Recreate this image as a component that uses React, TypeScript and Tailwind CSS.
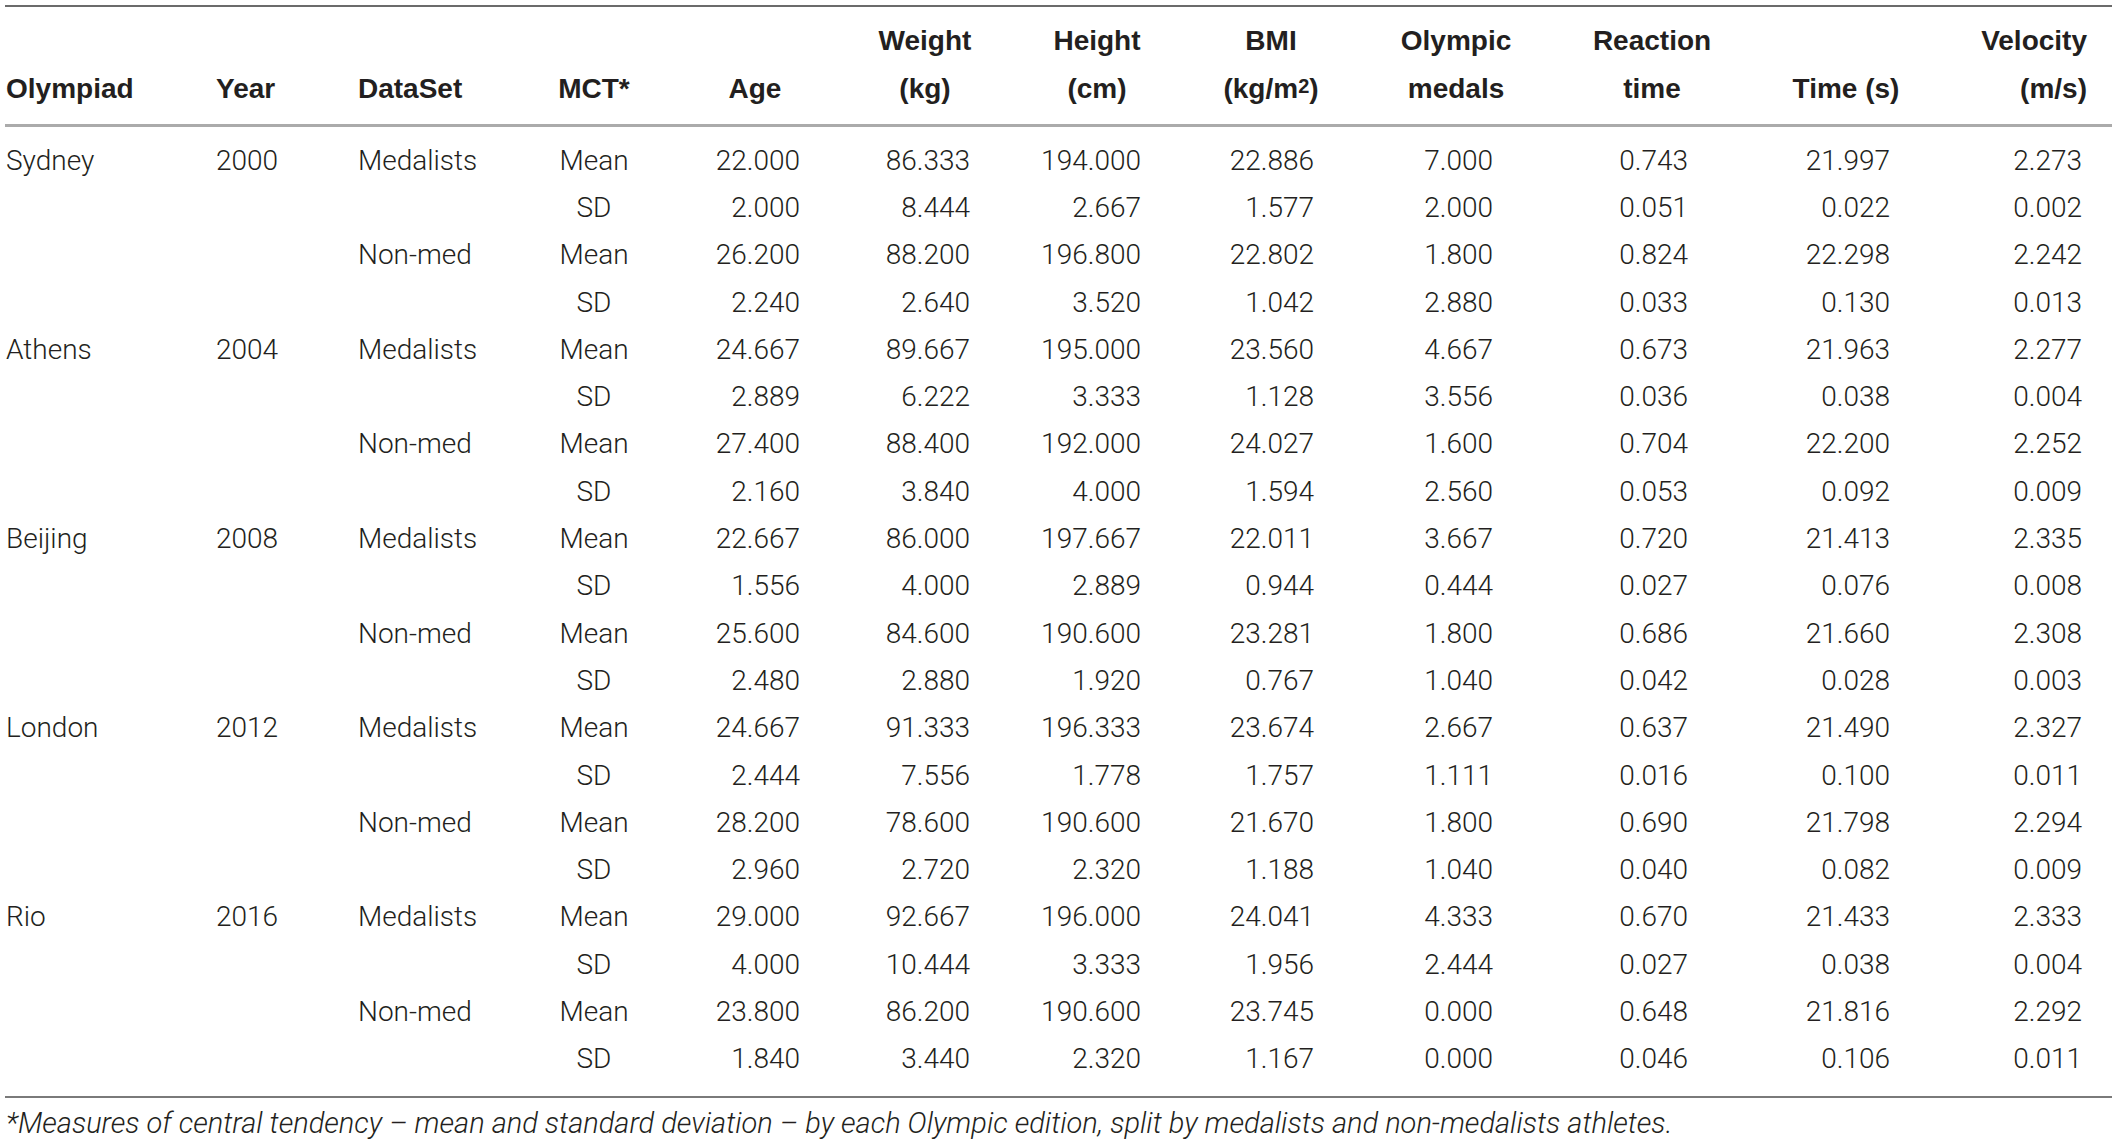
import React from "react";

type Row = { mct: string; v: string[] };
type Group = { name: string; year: string; sets: { label: string; rows: Row[] }[] };

const data: Group[] = [
  {
    name: "Sydney",
    year: "2000",
    sets: [
      { label: "Medalists", rows: [
        { mct: "Mean", v: ["22.000", "86.333", "194.000", "22.886", "7.000", "0.743", "21.997", "2.273"] },
        { mct: "SD", v: ["2.000", "8.444", "2.667", "1.577", "2.000", "0.051", "0.022", "0.002"] },
      ] },
      { label: "Non-med", rows: [
        { mct: "Mean", v: ["26.200", "88.200", "196.800", "22.802", "1.800", "0.824", "22.298", "2.242"] },
        { mct: "SD", v: ["2.240", "2.640", "3.520", "1.042", "2.880", "0.033", "0.130", "0.013"] },
      ] },
    ],
  },
  {
    name: "Athens",
    year: "2004",
    sets: [
      { label: "Medalists", rows: [
        { mct: "Mean", v: ["24.667", "89.667", "195.000", "23.560", "4.667", "0.673", "21.963", "2.277"] },
        { mct: "SD", v: ["2.889", "6.222", "3.333", "1.128", "3.556", "0.036", "0.038", "0.004"] },
      ] },
      { label: "Non-med", rows: [
        { mct: "Mean", v: ["27.400", "88.400", "192.000", "24.027", "1.600", "0.704", "22.200", "2.252"] },
        { mct: "SD", v: ["2.160", "3.840", "4.000", "1.594", "2.560", "0.053", "0.092", "0.009"] },
      ] },
    ],
  },
  {
    name: "Beijing",
    year: "2008",
    sets: [
      { label: "Medalists", rows: [
        { mct: "Mean", v: ["22.667", "86.000", "197.667", "22.011", "3.667", "0.720", "21.413", "2.335"] },
        { mct: "SD", v: ["1.556", "4.000", "2.889", "0.944", "0.444", "0.027", "0.076", "0.008"] },
      ] },
      { label: "Non-med", rows: [
        { mct: "Mean", v: ["25.600", "84.600", "190.600", "23.281", "1.800", "0.686", "21.660", "2.308"] },
        { mct: "SD", v: ["2.480", "2.880", "1.920", "0.767", "1.040", "0.042", "0.028", "0.003"] },
      ] },
    ],
  },
  {
    name: "London",
    year: "2012",
    sets: [
      { label: "Medalists", rows: [
        { mct: "Mean", v: ["24.667", "91.333", "196.333", "23.674", "2.667", "0.637", "21.490", "2.327"] },
        { mct: "SD", v: ["2.444", "7.556", "1.778", "1.757", "1.111", "0.016", "0.100", "0.011"] },
      ] },
      { label: "Non-med", rows: [
        { mct: "Mean", v: ["28.200", "78.600", "190.600", "21.670", "1.800", "0.690", "21.798", "2.294"] },
        { mct: "SD", v: ["2.960", "2.720", "2.320", "1.188", "1.040", "0.040", "0.082", "0.009"] },
      ] },
    ],
  },
  {
    name: "Rio",
    year: "2016",
    sets: [
      { label: "Medalists", rows: [
        { mct: "Mean", v: ["29.000", "92.667", "196.000", "24.041", "4.333", "0.670", "21.433", "2.333"] },
        { mct: "SD", v: ["4.000", "10.444", "3.333", "1.956", "2.444", "0.027", "0.038", "0.004"] },
      ] },
      { label: "Non-med", rows: [
        { mct: "Mean", v: ["23.800", "86.200", "190.600", "23.745", "0.000", "0.648", "21.816", "2.292"] },
        { mct: "SD", v: ["1.840", "3.440", "2.320", "1.167", "0.000", "0.046", "0.106", "0.011"] },
      ] },
    ],
  },
];

// column grid: Olympiad, Year, DataSet, MCT, then 8 numeric columns
const cols = "grid grid-cols-[211px_142px_182px_108px_152px_170px_171px_173px_179px_195px_202px_222px]";

function Head({ pad, children }: { pad: string; children: React.ReactNode }) {
  // centred over the numbers below; the label may overflow both sides
  return (
    <div className={`flex justify-center ${pad}`}>
      <div className="text-center whitespace-nowrap">{children}</div>
    </div>
  );
}

export default function App() {
  const rows: { olymp: string; year: string; set: string; r: Row }[] = [];
  data.forEach((g) =>
    g.sets.forEach((s, si) =>
      s.rows.forEach((r, ri) =>
        rows.push({
          olymp: si === 0 && ri === 0 ? g.name : "",
          year: si === 0 && ri === 0 ? g.year : "",
          set: ri === 0 ? s.label : "",
          r,
        })
      )
    )
  );

  return (
    <div className="min-h-screen bg-white text-[#231f20] font-['Roboto','Liberation_Sans',sans-serif]">
      <div className="ml-[5px] w-[2107px] pt-[5px]">
        {/* header */}
        <div className={`${cols} h-[122px] border-t-2 border-[#6b6b6b] border-b-[3px] border-b-[#ababab] font-['Liberation_Sans',Arial,sans-serif] font-bold text-[28px] leading-[48px] items-end pb-[11px]`}>
          <div className="pl-[1px]">Olympiad</div>
          <div>Year</div>
          <div>DataSet</div>
          <Head pad="">MCT*</Head>
          <Head pad="pl-[62px]">Age</Head>
          <Head pad="pl-[80px]">Weight<br />(kg)</Head>
          <Head pad="pl-[83px]">Height<br />(cm)</Head>
          <Head pad="pl-[87px]">
            BMI<br />(kg/m<sup className="text-[20px] leading-none relative -top-[5px]">2</sup>)
          </Head>
          <Head pad="pl-[105px]">Olympic<br />medals</Head>
          <Head pad="pl-[123px]">Reaction<br />time</Head>
          <Head pad="pl-[114px]">Time (s)</Head>
          <div className="text-right pr-[25px]">Velocity<br />(m/s)</div>
        </div>

        {/* body */}
        <div className="pt-[10px] pb-[13px] border-b-2 border-[#7a7a7a] font-light text-[28px]">
          {rows.map((row, i) => (
            <div key={i} className={`${cols} h-[47.3px] items-center`}>
              <div className="pl-[1px]">{row.olymp}</div>
              <div>{row.year}</div>
              <div>{row.set}</div>
              <div className="text-center">{row.r.mct}</div>
              {row.r.v.map((n, j) => (
                <div key={j} className={j === 7 ? "text-right pr-[30px]" : "text-right"}>
                  {n}
                </div>
              ))}
            </div>
          ))}
        </div>

        {/* footnote */}
        <p className="mt-[9px] pl-[1px] italic font-light text-[29px] leading-[32px] whitespace-nowrap">
          *Measures of central tendency – mean and standard deviation – by each Olympic edition, split by medalists and non-medalists athletes.
        </p>
      </div>
    </div>
  );
}
